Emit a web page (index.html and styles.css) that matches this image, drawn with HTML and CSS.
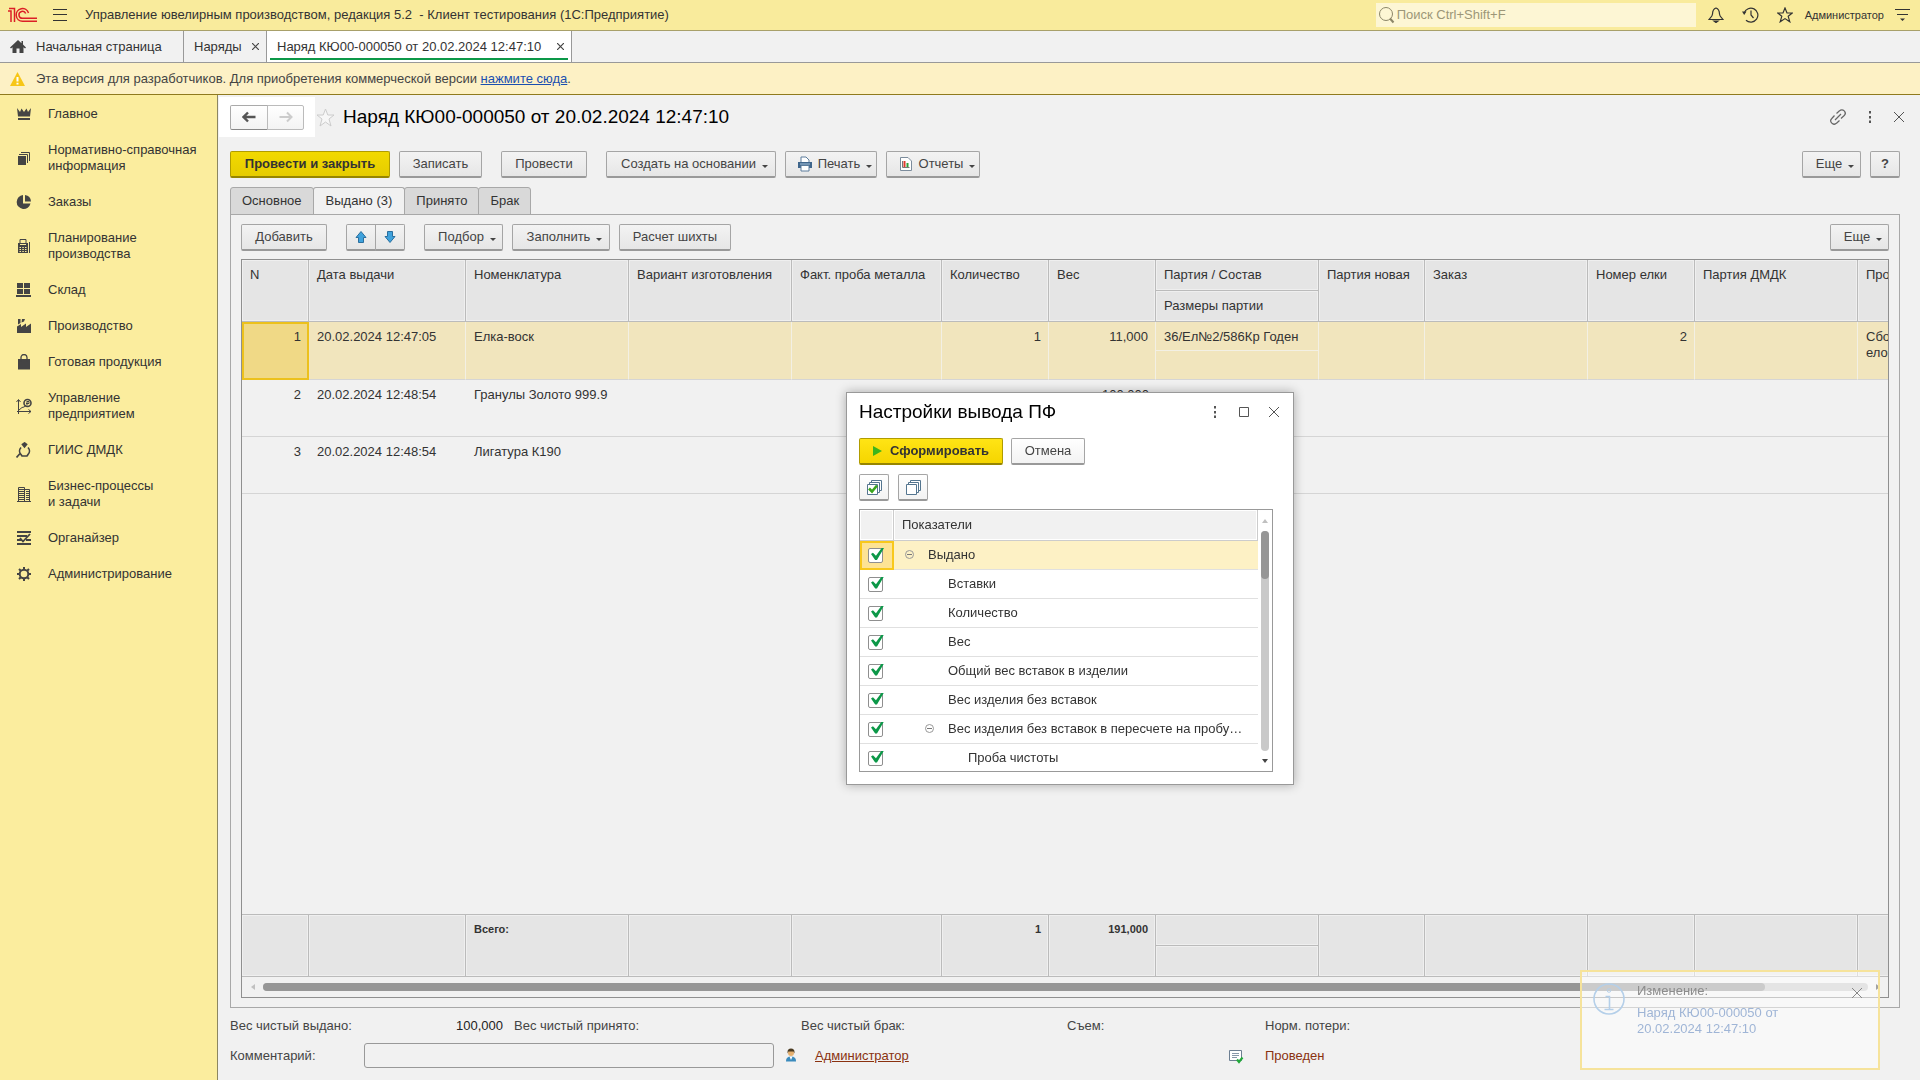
FILE: index.html
```html
<!DOCTYPE html>
<html lang="ru">
<head>
<meta charset="utf-8">
<title>Управление ювелирным производством</title>
<link rel="stylesheet" href="styles.css">
</head>
<body>
<header class="topbar">
  <svg class="logo" width="30" height="16" viewBox="0 0 30 16" fill="none" stroke="#dc1f26" stroke-width="1.500"><path d="M0 4H3V15M1 1.500H6.500V15"/><path d="M20.500 6A6.300 6.300 0 1 0 14.500 14.200H29M17.700 6.500A3.500 3.500 0 1 0 14.500 11.300H29"/></svg>
  <button class="icon-btn menu-btn" aria-label="Меню"><svg width="14" height="12" viewBox="0 0 14 12" stroke="#333" fill="none"><path d="M0 .5H14M0 5.500H14M0 11.500H14"/></svg></button>
  <span class="app-title">Управление ювелирным производством, редакция 5.2 &nbsp;- Клиент тестирования (1С:Предприятие)</span>
  <div class="search">
    <svg width="16" height="17" viewBox="0 0 16 17" fill="none" stroke="#8c8668"><circle cx="7" cy="7" r="6.500"/><path d="M11 11.500L14.500 15.500" stroke-width="2"/></svg>
    <input type="text" placeholder="Поиск Ctrl+Shift+F" aria-label="Поиск">
  </div>
  <nav class="top-icons">
    <button class="icon-btn" aria-label="Уведомления"><svg width="16" height="16" viewBox="0 0 16 16" fill="none" stroke="#333" stroke-width="1.200"><path d="M8 1C4.800 2 4.600 4 4.500 7C4.400 9.500 2.500 10.500 1 12.500H15C13.500 10.500 11.600 9.500 11.500 7C11.400 4 11.200 2 8 1Z"/><path d="M6 14H10L8 15.500Z" fill="#333"/></svg></button>
    <button class="icon-btn" aria-label="История"><svg width="17" height="16" viewBox="0 0 17 16" fill="none" stroke="#333" stroke-width="1.200"><path d="M2.200 6A7 7 0 1 1 4 13.200M9 3.500V8L11.500 11"/><path d="M0 4.500H4.500L2.200 8Z" fill="#333" stroke="none"/></svg></button>
    <button class="icon-btn" aria-label="Избранное"><svg width="16" height="16" viewBox="0 0 16 16" fill="none" stroke="#333" stroke-width="1.200"><path d="M8 1L10 6H15.300L11.200 9.300L12.800 14.800L8 11.600L3.200 14.800L4.800 9.300L.7 6H6Z"/></svg></button>
    <a class="user" href="#">Администратор</a>
    <button class="icon-btn" aria-label="Настройки"><svg width="15" height="14" viewBox="0 0 15 14" fill="none" stroke="#333"><path d="M0 1.500H15M2 6.500H13"/><path d="M5 10.500H10L7.500 13Z" fill="#333" stroke="none"/></svg></button>
  </nav>
</header>

<nav class="window-tabs">
  <a class="wtab home" href="#"><svg width="16" height="14" viewBox="0 0 16 14" fill="#444"><path d="M8 0L0 7.500L1 8.500L2.500 7.300V13H6.500V8.500H9.500V13H13.500V7.300L15 8.500L16 7.500L13 4.600V1H11.500V3.300Z"/></svg>Начальная страница</a>
  <a class="wtab list" href="#">Наряды <svg width="7" height="7" viewBox="0 0 7 7" stroke="#444" stroke-width="1.200"><path d="M0 0L7 7M7 0L0 7"/></svg></a>
  <a class="wtab active" href="#">Наряд КЮ00-000050 от 20.02.2024 12:47:10 <svg width="7" height="7" viewBox="0 0 7 7" stroke="#444" stroke-width="1.200"><path d="M0 0L7 7M7 0L0 7"/></svg></a>
</nav>

<div class="notice">
  <svg width="15" height="14" viewBox="0 0 15 14"><path d="M7.500 0L15 14H0Z" fill="#f7c617"/><path d="M6.500 5H8.500V9.500H6.500ZM6.500 10.800H8.500V12.500H6.500Z" fill="#fff"/></svg>
  <span>Эта версия для разработчиков. Для приобретения коммерческой версии <a href="#">нажмите сюда</a>.</span>
</div>

<div class="workspace">
  <nav class="sidebar">
    <a href="#"><svg width="16" height="16" viewBox="0 0 16 16" fill="#444"><path d="M1 2L4 6L5.500 2.500L8 6L10.500 2.500L12 6L15 2L14 10.500H2ZM2 12H14V14H2Z"/></svg>Главное</a>
    <a href="#"><svg width="16" height="16" viewBox="0 0 16 16" fill="#444"><path d="M2 6H10V15H2Z"/><path d="M3 4.500H11.500V13M5 2.500H13.500V11" fill="none" stroke="#444"/></svg>Нормативно-справочная информация</a>
    <a href="#"><svg width="16" height="16" viewBox="0 0 16 16" fill="#444"><path d="M7 1A7 7 0 1 0 14.500 9.500H7Z"/><path d="M9 1A7 7 0 0 1 15 7.500H9Z"/></svg>Заказы</a>
    <a href="#"><svg width="16" height="16" viewBox="0 0 16 16" fill="#444"><path d="M2 5H12V15H2Z"/><path d="M4 5V1.500H10V5M13.500 4V15" fill="none" stroke="#444"/><path d="M4 6.500H10M3.500 9.500H5M6.300 9.500H7.800M9 9.500H10.500M3.500 11.500H5M6.300 11.500H7.800M9 11.500H10.500M3.500 13.500H5M6.300 13.500H7.800M9 13.500H10.500" stroke="#fbed9e"/></svg>Планирование производства</a>
    <a href="#"><svg width="16" height="16" viewBox="0 0 16 16" fill="#444"><path d="M1 1H7V6H1ZM8 1H14V6H8ZM1 7H7V12H1ZM8 7H14V12H8ZM0 13H15V15H0Z"/></svg>Склад</a>
    <a href="#"><svg width="16" height="16" viewBox="0 0 16 16" fill="#444"><path d="M1 15V8.500L5 6V9L10 5.500V9L15 5.500V15ZM2 1H4.500V5L2 6.500ZM6 1H9L8 3.500L5.500 4.500Z"/></svg>Производство</a>
    <a href="#"><svg width="16" height="16" viewBox="0 0 16 16" fill="#444"><path d="M2 5H14V15.500H2Z"/><path d="M5 8V3.500A3 3 0 0 1 11 3.500V8" fill="none" stroke="#444" stroke-width="1.300"/></svg>Готовая продукция</a>
    <a href="#"><svg width="16" height="16" viewBox="0 0 16 16" fill="none" stroke="#444"><path d="M2.500 16V2M.5 4L2.500 1.500L4.500 4M1 13.500H15M12.500 11.500L15 13.500L12.500 15.500M3 12L6 9.500L8 9L10 7.500"/><circle cx="11.500" cy="5" r="3.500" stroke-width="1.600"/><path d="M11 3V7.500M11 3.500H13V5.500H10"/></svg>Управление предприятием</a>
    <a href="#"><svg width="16" height="16" viewBox="0 0 16 16" fill="none" stroke="#444" stroke-width="1.700"><path d="M5 5.500A5 5 0 0 0 5 12.500L6 14H11L12 12.500A5 5 0 0 0 12 5.500M4.500 11L.5 15.500"/><path d="M8.500 1L10.500 2.500L8.500 5L6.500 2.500Z" fill="#444"/></svg>ГИИС ДМДК</a>
    <a href="#"><svg width="16" height="16" viewBox="0 0 16 16" fill="none" stroke="#444"><path d="M1 15.500H15M2.500 15V1.500H8.500V15M8.500 3.500H13.500V15M3 3.500H8M3 5.500H8M3 7.500H8M3 9.500H8M3 11.500H8M3 13.500H8M10 5.500H13M10 7.500H13M10 9.500H13M10 11.500H13M10 13.500H13"/></svg>Бизнес-процессы и&nbsp;задачи</a>
    <a href="#"><svg width="16" height="16" viewBox="0 0 16 16" fill="none" stroke="#444" stroke-width="1.800"><path d="M1 2H15M1 6H11M1 10H5M10 10H15M1 14H15M4 8L7 11.500L14 4"/></svg>Органайзер</a>
    <a href="#"><svg width="16" height="16" viewBox="0 0 16 16" fill="none" stroke="#444" stroke-width="2"><circle cx="8" cy="8" r="4.300"/><path d="M8 1V3.500M8 12.500V15M1 8H3.500M12.500 8H15M3 3L4.800 4.800M11.200 11.200L13 13M3 13L4.800 11.200M11.200 4.800L13 3"/></svg>Администрирование</a>
  </nav>

  <main class="form">
    <div class="form-head">
      <div class="history">
        <button aria-label="Назад"><svg width="14" height="12" viewBox="0 0 14 12" fill="none" stroke="#555" stroke-width="2.400"><path d="M13.500 6H2M6 1.500L1.500 6L6 10.500"/></svg></button><button aria-label="Вперед"><svg width="14" height="12" viewBox="0 0 14 12" fill="none" stroke="#ccc" stroke-width="2"><path d="M.5 6H12M8 1.500L12.500 6L8 10.500"/></svg></button>
      </div>
      <svg width="19" height="19" viewBox="0 0 19 19" fill="#f7f7f7" stroke="#ccc"><path d="M9.500 1L11.800 7H18L13 11L15 18L9.500 14L4 18L6 11L1 7H7.200Z"/></svg>
      <h1>Наряд КЮ00-000050 от 20.02.2024 12:47:10</h1>
      <div class="form-tools">
        <button class="icon-btn" aria-label="Ссылка"><svg width="16" height="16" viewBox="0 0 16 16" fill="none" stroke="#666" stroke-width="1.200"><path d="M6.500 4.500L9.500 1.800A3.200 3.200 0 0 1 14.200 6.500L11 9.500M9.500 11.500L6.500 14.200A3.200 3.200 0 0 1 1.800 9.500L4.500 6.500M5 11L11 5"/></svg></button>
        <button class="icon-btn" aria-label="Дополнительно"><svg width="4" height="12" viewBox="0 0 4 12" fill="#555"><path d="M1 0H3V2.500H1ZM1 5H3V7.500H1ZM1 9.500H3V12H1Z"/></svg></button>
        <button class="icon-btn" aria-label="Закрыть"><svg width="10" height="10" viewBox="0 0 10 10" stroke="#555"><path d="M0 0L10 10M10 0L0 10"/></svg></button>
      </div>
    </div>

    <div class="commands">
      <button class="btn primary w160">Провести и закрыть</button>
      <button class="btn w83">Записать</button>
      <button class="btn gap-left w86">Провести</button>
      <button class="btn gap-left w170">Создать на основании<i class="caret"></i></button>
      <button class="btn w92"><svg width="16" height="16" viewBox="0 0 16 16"><path d="M1 6H15V12H1Z" fill="#3f668c"/><path d="M4 6V1H9L12 4V6M4 9.500H12V15H4Z" fill="#fff" stroke="#5c7d9c"/><path d="M3 8H13" stroke="#a9c4dc"/></svg>Печать<i class="caret"></i></button>
      <button class="btn w94"><svg width="16" height="16" viewBox="0 0 16 16"><path d="M2.500 1.500H10L13.500 5V14.500H2.500Z" fill="#fff" stroke="#7c8c9c"/><path d="M4.500 5V11.500H11.500" fill="none" stroke="#777"/><path d="M5.500 5H7.500V11H5.500Z" fill="#e03a2e"/><path d="M8.500 7H10.500V11H8.500Z" fill="#2e9e3a"/></svg>Отчеты<i class="caret"></i></button>
      <button class="btn push w59">Еще<i class="caret"></i></button>
      <button class="btn help w30">?</button>
    </div>

    <div class="page-tabs">
      <button>Основное</button><button class="current">Выдано (3)</button><button>Принято</button><button>Брак</button>
    </div>

    <section class="page">
      <div class="commands">
        <button class="btn w86">Добавить</button>
        <div class="pair gap-left">
          <button class="btn" aria-label="Вверх"><svg width="14" height="14" viewBox="0 0 14 14" fill="#3fa2dc" stroke="#2a6f9e"><path d="M7 1.500L12 7.500H9.500V12.500H4.500V7.500H2Z"/></svg></button><button class="btn" aria-label="Вниз"><svg width="14" height="14" viewBox="0 0 14 14" fill="#3fa2dc" stroke="#2a6f9e"><path d="M7 12.500L12 6.500H9.500V1.500H4.500V6.500H2Z"/></svg></button>
        </div>
        <button class="btn gap-left w79">Подбор<i class="caret"></i></button>
        <button class="btn w98">Заполнить<i class="caret"></i></button>
        <button class="btn w112">Расчет шихты</button>
        <button class="btn push w59">Еще<i class="caret"></i></button>
      </div>

      <div class="grid-box">
        <table class="grid">
          <colgroup><col class="c66"><col class="c157"><col class="c163"><col class="c163"><col class="c150"><col class="c107"><col class="c107"><col class="c163"><col class="c106"><col class="c163"><col class="c107"><col class="c163"><col class="c107"></colgroup>
          <thead>
            <tr><th rowspan="2">N</th><th rowspan="2">Дата выдачи</th><th rowspan="2">Номенклатура</th><th rowspan="2">Вариант изготовления</th><th rowspan="2">Факт. проба металла</th><th rowspan="2">Количество</th><th rowspan="2">Вес</th><th>Партия / Состав</th><th rowspan="2">Партия новая</th><th rowspan="2">Заказ</th><th rowspan="2">Номер елки</th><th rowspan="2">Партия ДМДК</th><th rowspan="2">Процесс</th></tr>
            <tr><th>Размеры партии</th></tr>
          </thead>
          <tbody class="selected">
            <tr><td rowspan="2" class="num focus">1</td><td rowspan="2">20.02.2024 12:47:05</td><td rowspan="2">Елка-воск</td><td rowspan="2"></td><td rowspan="2"></td><td rowspan="2" class="num">1</td><td rowspan="2" class="num">11,000</td><td class="upper">36/Ел№2/586Кр Годен</td><td rowspan="2"></td><td rowspan="2"></td><td rowspan="2" class="num">2</td><td rowspan="2"></td><td rowspan="2">Сборка<br>елок</td></tr>
            <tr><td></td></tr>
          </tbody>
          <tbody class="plain">
            <tr><td class="num">2</td><td>20.02.2024 12:48:54</td><td>Гранулы Золото 999.9</td><td></td><td></td><td></td><td class="num">100,000</td><td></td><td></td><td></td><td></td><td></td><td></td></tr>
            <tr><td class="num">3</td><td>20.02.2024 12:48:54</td><td>Лигатура К190</td><td></td><td></td><td></td><td></td><td></td><td></td><td></td><td></td><td></td><td></td></tr>
          </tbody>
        </table>
        <table class="grid totals">
          <colgroup><col class="c66"><col class="c157"><col class="c163"><col class="c163"><col class="c150"><col class="c107"><col class="c107"><col class="c163"><col class="c106"><col class="c163"><col class="c107"><col class="c163"><col class="c107"></colgroup>
          <tbody>
            <tr><td rowspan="2"></td><td rowspan="2"></td><td rowspan="2">Всего:</td><td rowspan="2"></td><td rowspan="2"></td><td rowspan="2" class="num">1</td><td rowspan="2" class="num">191,000</td><td></td><td rowspan="2"></td><td rowspan="2"></td><td rowspan="2"></td><td rowspan="2"></td><td rowspan="2"></td></tr>
            <tr><td></td></tr>
          </tbody>
        </table>
        <div class="hscroll"><i class="arrow left"></i><div class="track"><div class="thumb" style="width: 93.6%"></div></div><i class="arrow right"></i></div>
      </div>
    </section>

    <div class="summary">
      <div class="sum-first"><span>Вес чистый выдано:</span><b>100,000</b></div><span>Вес чистый принято:</span><span>Вес чистый брак:</span><span>Съем:</span><span>Норм. потери:</span>
    </div>
    <div class="comment">
      <label for="comment">Комментарий:</label>
      <input id="comment" type="text">
      <svg width="16" height="16" viewBox="0 0 16 16"><path d="M3 13Q3 8.500 8 8.500T13 13V13.500H3Z" fill="#3b8bbd"/><path d="M6.500 8.500H9.500L8 12Z" fill="#fff"/><circle cx="8" cy="5" r="3" fill="#e5b070"/><path d="M4.500 5.500V4A3.500 3.500 0 0 1 11.500 4V5.500L10.500 3.500H5.500Z" fill="#4a3a20"/></svg>
      <a class="author" href="#">Администратор</a>
      <svg class="state-icon" width="16" height="16" viewBox="0 0 16 16" fill="none"><path d="M1.500 2.500H13.500V12.500H1.500Z" fill="#fff" stroke="#6d7f92"/><path d="M4 5.500H11M4 7.500H11M4 9.500H9" stroke="#8797a8"/><path d="M9 11.500L11 14L14.500 9.500" stroke="#22a83a" stroke-width="2.200"/></svg>
      <span class="state">Проведен</span>
    </div>
  </main>
</div>

<aside class="toast">
  <svg width="32" height="32" viewBox="0 0 32 32" fill="none" stroke="#b4cfe9"><circle cx="16" cy="16" r="15" stroke-width="1.600"/><circle cx="16" cy="7.500" r="1.800"/><path d="M12.500 13.500H16.500V26M11.500 26.500H20.500" stroke-width="1.600"/></svg>
  <div><p>Изменение:</p><a href="#">Наряд КЮ00-000050 от 20.02.2024 12:47:10</a></div>
  <button class="icon-btn" aria-label="Закрыть"><svg width="10" height="10" viewBox="0 0 10 10" stroke="#888"><path d="M0 0L10 10M10 0L0 10"/></svg></button>
</aside>

<div class="dialog" role="dialog" aria-labelledby="dlg-title">
  <div class="dialog-head">
    <h2 id="dlg-title">Настройки вывода ПФ</h2>
    <button class="icon-btn" aria-label="Дополнительно"><svg width="4" height="12" viewBox="0 0 4 12" fill="#555"><path d="M1 0H3V2.500H1ZM1 5H3V7.500H1ZM1 9.500H3V12H1Z"/></svg></button>
    <button class="icon-btn" aria-label="Развернуть"><svg width="10" height="10" viewBox="0 0 10 10" fill="none" stroke="#555"><path d="M.5 .5H9.500V9.500H.5Z"/></svg></button>
    <button class="icon-btn" aria-label="Закрыть"><svg width="10" height="10" viewBox="0 0 10 10" stroke="#555"><path d="M0 0L10 10M10 0L0 10"/></svg></button>
  </div>
  <div class="dialog-row">
    <button class="btn primary bright w144"><svg width="9" height="10" viewBox="0 0 9 10" fill="#3db51c"><path d="M0 0L9 5L0 10Z"/></svg>Сформировать</button>
    <button class="btn light w74">Отмена</button>
  </div>
  <div class="dialog-row marks">
    <button class="btn light w30" aria-label="Установить все"><svg width="16" height="16" viewBox="0 0 16 16" fill="#fff" stroke="#54758f"><path d="M5.500 1.500H15.500V11.500H5.500Z"/><path d="M3.500 3.500H13.500V13.500H3.500Z"/><path d="M1.500 5.500H11.500V15.500H1.500Z"/><path d="M3 9.500L6 12.500L11 6.500" fill="none" stroke="#3aa51e" stroke-width="2.600"/></svg></button>
    <button class="btn light w30" aria-label="Снять все"><svg width="16" height="16" viewBox="0 0 16 16" fill="#fff" stroke="#54758f"><path d="M5.500 1.500H15.500V11.500H5.500Z"/><path d="M3.500 3.500H13.500V13.500H3.500Z"/><path d="M1.500 5.500H11.500V15.500H1.500Z"/></svg></button>
  </div>
  <div class="tree-box">
    <table class="tree">
      <colgroup><col class="c34"><col></colgroup>
      <thead><tr><th></th><th>Показатели</th></tr></thead>
      <tbody>
        <tr class="cur"><td><input type="checkbox" id="k1" checked></td><td class="l1"><i class="fold"></i><label for="k1">Выдано</label></td></tr>
        <tr><td><input type="checkbox" id="k2" checked></td><td class="l2"><label for="k2">Вставки</label></td></tr>
        <tr><td><input type="checkbox" id="k3" checked></td><td class="l2"><label for="k3">Количество</label></td></tr>
        <tr><td><input type="checkbox" id="k4" checked></td><td class="l2"><label for="k4">Вес</label></td></tr>
        <tr><td><input type="checkbox" id="k5" checked></td><td class="l2"><label for="k5">Общий вес вставок в изделии</label></td></tr>
        <tr><td><input type="checkbox" id="k6" checked></td><td class="l2"><label for="k6">Вес изделия без вставок</label></td></tr>
        <tr><td><input type="checkbox" id="k7" checked></td><td class="l2 group"><i class="fold"></i><label for="k7">Вес изделия без вставок в пересчете на пробу…</label></td></tr>
        <tr><td><input type="checkbox" id="k8" checked></td><td class="l3"><label for="k8">Проба чистоты</label></td></tr>
      </tbody>
    </table>
    <div class="vscroll"><i class="arrow up"></i><div class="track"><div class="thumb"></div></div><i class="arrow down"></i></div>
  </div>
</div>
</body>
</html>
```
FILE: styles.css
```css
* { box-sizing: border-box; }
body {
  margin: 0;
  min-height: 100vh;
  display: flex;
  flex-direction: column;
  background: #f1f1f1;
  color: #333;
  font: 13px/16px "Liberation Sans", Arial, sans-serif;
}
button, input { font: inherit; color: inherit; }
a { color: inherit; text-decoration: none; }
svg { flex: none; display: block; }
h1, h2, p { margin: 0; font-weight: normal; color: #000; }
.icon-btn { border: 0; padding: 0; background: none; }

/* Top bar */
.topbar {
  height: 31px;
  display: flex;
  align-items: center;
  padding: 0 10px 0 8px;
  background: #f9eb9c;
  border-bottom: 1px solid #a8a06a;
}
.menu-btn { margin: 0 18px 0 15px; }
.search {
  margin-left: auto;
  width: 320px;
  height: 24px;
  display: flex;
  align-items: center;
  gap: 2px;
  padding-left: 3px;
  background: #fdf6d4;
}
.search input { flex: 1; min-width: 0; border: 0; padding: 0; background: none; }
.search input::placeholder { color: #9c9678; opacity: 1; }
.top-icons { display: flex; align-items: center; gap: 18px; margin-left: 12px; }
.user { font-size: 11px; margin-left: -6px; margin-right: -7px; }

/* Window tabs */
.window-tabs { display: flex; height: 32px; border-bottom: 1px solid #999; }
.wtab {
  display: flex;
  align-items: center;
  justify-content: space-between;
  padding: 0 7px 0 10px;
  border-right: 1px solid #999;
}
.wtab.home { width: 184px; justify-content: flex-start; gap: 10px; }
.wtab.list { width: 83px; }
.wtab.active { width: 305px; background: #fff; position: relative; }
.wtab.active::after {
  content: "";
  position: absolute;
  left: 3px;
  right: 3px;
  bottom: 2px;
  height: 2px;
  background: #0c9848;
}

.notice {
  height: 32px;
  display: flex;
  align-items: center;
  gap: 11px;
  padding-left: 10px;
  background: #fdf1c5;
  border-bottom: 1px solid #8f7a1e;
  color: #444;
}
.notice a { color: #1a4fb0; text-decoration: underline; }

/* Sections */
.workspace { flex: 1; display: flex; }
.sidebar {
  width: 218px;
  flex: none;
  padding-top: 1px;
  background: #fbed9e;
  border-right: 1px solid #8c8661;
}
.sidebar a {
  display: flex;
  align-items: center;
  gap: 16px;
  padding: 10px 14px 10px 16px;
}

/* Form */
.form { flex: 1; min-width: 0; display: flex; flex-direction: column; padding: 0 20px 12px 12px; }
.form-head { display: flex; align-items: center; height: 44px; margin-bottom: 12px; }
.history {
  display: flex;
  height: 40px;
  align-items: center;
  padding: 0 11px;
  margin: 0 1px 0 -11px;
  background: #fff;
}
.history button {
  width: 38px;
  height: 25px;
  display: flex;
  align-items: center;
  justify-content: center;
  padding: 0;
  background: linear-gradient(#fff, #f3f3f3);
  border: 1px solid #aaa;
  border-bottom-color: #888;
  border-radius: 2px 0 0 2px;
}
.history button + button { width: 37px; margin-left: -1px; border-radius: 0 2px 2px 0; border-color: #bbb; }
h1 { font-size: 19px; line-height: 24px; margin-left: 8px; }
.form-tools { display: flex; align-items: center; gap: 22px; margin-left: auto; margin-right: -4px; }

.commands { display: flex; gap: 9px; }
.btn {
  height: 27px;
  display: flex;
  align-items: center;
  justify-content: center;
  gap: 5px;
  padding: 0;
  white-space: nowrap;
  color: #444;
  background: linear-gradient(#f3f3f3, #e6e6e6);
  border: 1px solid #a5a5a5;
  border-bottom: 2px solid #999;
  border-radius: 2px;
}
.btn.light { background: linear-gradient(#fff, #f3f3f3); }
.btn.primary {
  font-weight: bold;
  color: #333;
  background: linear-gradient(#f2d900, #e6cc00);
  border-color: #b09c00;
  border-bottom-color: #968500;
}
.btn.primary.bright { background: linear-gradient(#ffe415, #f5d500); gap: 8px; }
.btn.help { font-weight: bold; }
.gap-left { margin-left: 10px; }
.push { margin-left: auto; }
.pair { display: flex; }
.pair .btn { width: 30px; border-radius: 2px 0 0 2px; }
.pair .btn + .btn { margin-left: -1px; border-radius: 0 2px 2px 0; }
.caret {
  border: 3px solid transparent;
  border-top-color: #444;
  border-bottom: 0;
  margin: 4px -7px 0 1px;
}
.w30 { width: 30px; }
.w59 { width: 59px; }
.w74 { width: 74px; }
.w79 { width: 79px; }
.w83 { width: 83px; }
.w86 { width: 86px; }
.w92 { width: 92px; }
.w94 { width: 94px; }
.w98 { width: 98px; }
.w112 { width: 112px; }
.w144 { width: 144px; }
.w160 { width: 160px; }
.w170 { width: 170px; }

.page-tabs { display: flex; margin-top: 9px; }
.page-tabs button {
  height: 28px;
  padding: 0 11px;
  background: #d9d9d9;
  border: 1px solid #a8a8a8;
  border-radius: 3px 3px 0 0;
  margin-right: -1px;
  margin-bottom: -1px;
}
.page-tabs .current { padding: 0 12px; background: #f1f1f1; border-bottom-color: #f1f1f1; }

.page {
  flex: 1;
  min-width: 0;
  display: flex;
  flex-direction: column;
  gap: 8px;
  padding: 9px 10px;
  border: 1px solid #a8a8a8;
}

/* Table part */
.grid-box {
  flex: 1;
  display: flex;
  flex-direction: column;
  overflow: hidden;
  border: 1px solid #8f8f8f;
}
.grid { table-layout: fixed; width: 0; border-collapse: separate; border-spacing: 0; }
.c34 { width: 34px; }
.c66 { width: 67px; }
.c106 { width: 106px; }
.c107 { width: 107px; }
.c150 { width: 150px; }
.c157 { width: 157px; }
.c163 { width: 163px; }
.grid th, .grid td {
  padding: 7px 7px 0 8px;
  vertical-align: top;
  text-align: left;
  font-weight: normal;
  white-space: nowrap;
}
.grid th, .totals td {
  height: 31px;
  background: #e5e5e5;
  border-right: 1px solid #bbb;
  border-bottom: 1px solid #bbb;
  box-shadow: inset 0 0 0 1px #efefef;
}
.grid .num { text-align: right; }
.selected td {
  height: 29px;
  background: #f1e5bd;
  border-right: 1px solid #f3f0e4;
  border-bottom: 1px solid #d5d5d5;
}
.selected .upper { border-bottom-color: #f3f0e4; }
.grid .focus { background: #f0d986; border: 2px solid #ecc11c; padding: 5px 6px 0; }
.grid.totals td { padding-top: 6px; font-weight: bold; }
.plain td { height: 57px; border-bottom: 1px solid #d5d5d5; }
.plain td:first-child { padding-right: 8px; }
.totals { margin-top: auto; font-size: 11px; border-top: 1px solid #bbb; }
.hscroll { display: flex; align-items: center; gap: 8px; height: 20px; padding: 0 8px 0 9px; }
.track { flex: 1; background: #c9c9c9; border-radius: 4px; }
.thumb { background: #969696; border-radius: 4px; }
.hscroll .thumb { height: 8px; }
.arrow { border: 3px solid transparent; }
.arrow.left { border-right: 4px solid #c0c0c0; border-left: 0; }
.arrow.right { border-left: 4px solid #444; border-right: 0; }
.arrow.up { border-bottom: 4px solid #c0c0c0; border-top: 0; }
.arrow.down { border-top: 4px solid #444; border-bottom: 0; }

/* Footer of the form */
.summary {
  display: grid;
  grid-template-columns: 284px 287px 266px 198px 1fr;
  margin-top: 10px;
  color: #444;
}
.sum-first { display: flex; justify-content: space-between; padding-right: 11px; }
.sum-first b { font-weight: normal; color: #222; }
.comment { display: flex; align-items: center; margin-top: 9px; color: #444; }
.comment label { width: 134px; }
.comment input {
  width: 410px;
  height: 25px;
  margin-right: 9px;
  background: #f1f1f1;
  border: 1px solid #999;
  border-radius: 3px;
}
.author { width: 405px; margin-left: 16px; color: #8a3210; }
.author { text-decoration: underline; }
.state-icon { margin-left: 8px; }
.state { margin-left: 21px; color: #8a3210; }

/* Notification */
.toast {
  position: fixed;
  right: 40px;
  bottom: 10px;
  width: 300px;
  height: 100px;
  display: flex;
  gap: 12px;
  padding: 11px 16px 11px 11px;
  background: rgba(255, 255, 255, .5);
  border: 2px solid #f6e39b;
  color: #9fb5d6;
}
.toast div { width: 180px; }
.toast p { color: #8c8c8c; margin-bottom: 6px; }
.toast .icon-btn { align-self: flex-start; margin: 5px 0 0 auto; }

/* Dialog */
.dialog {
  position: fixed;
  left: 50%;
  top: 392px;
  margin-left: -114px;
  width: 448px;
  padding: 0 20px 12px 12px;
  background: #fff;
  border: 1px solid #999;
  box-shadow: 0 0 10px rgba(0, 0, 0, .3);
}
.dialog-head { display: flex; align-items: center; gap: 20px; height: 38px; margin-right: -6px; }
.dialog-head button:nth-of-type(1) { margin-right: 2px; }
h2 { flex: 1; font-size: 19px; line-height: 24px; }
.dialog-row { display: flex; gap: 8px; margin: 7px 0 9px; }
.dialog-row.marks { gap: 9px; margin-bottom: 8px; }
.tree-box { display: flex; height: 263px; overflow: hidden; border: 1px solid #999; }
.tree { flex: 1; table-layout: fixed; border-collapse: separate; border-spacing: 0; }
.tree th {
  height: 31px;
  padding: 0 8px;
  text-align: left;
  font-weight: normal;
  background: #f1f1f1;
  border-right: 1px solid #ccc;
  border-bottom: 1px solid #ccc;
  box-shadow: inset 0 0 0 1px #fff;
}
.tree td { height: 29px; padding: 0 8px; border-bottom: 1px solid #e0e0e0; white-space: nowrap; }
.tree .cur td { background: #fdf1c5; }
.tree .cur td:first-child { border: 2px solid #f8c81c; background: #fde394; padding: 0 6px; }
.tree .l1 { padding-left: 11px; }
.tree .l2 { padding-left: 54px; }
.tree .l2.group { padding-left: 31px; }
.tree .l3 { padding-left: 74px; }
.fold {
  display: inline-block;
  width: 9px;
  height: 9px;
  margin-right: 14px;
  border: 1px solid #999;
  border-radius: 50%;
  background: linear-gradient(#777, #777) center / 5px 1px no-repeat;
}
.tree input {
  appearance: none;
  display: block;
  width: 15px;
  height: 15px;
  margin: 0;
  background: #fff;
  border: 1px solid #8f8f8f;
  border-radius: 2px;
  position: relative;
}
.tree input:checked::after {
  content: "";
  position: absolute;
  left: 2px;
  top: -1px;
  width: 13px;
  height: 12px;
  background: #0c9848;
  clip-path: polygon(0 50%, 15% 40%, 38% 65%, 82% 0, 100% 0, 46% 100%, 32% 100%);
}
.vscroll {
  width: 14px;
  display: flex;
  flex-direction: column;
  align-items: center;
  gap: 8px;
  padding: 9px 0 8px;
}
.vscroll .track { width: 8px; }
.vscroll .thumb { height: 48px; }
```
